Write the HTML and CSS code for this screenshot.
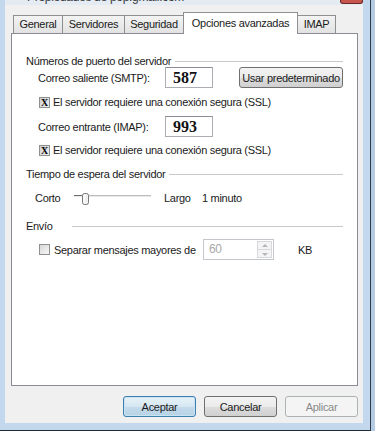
FILE: index.html
```html
<!DOCTYPE html>
<html lang="es">
<head>
  <meta charset="UTF-8">
  <title>Opciones avanzadas</title>
  <link rel="stylesheet" href="styles.css">
</head>
<body>

<div class="screen">
  <div class="window">
    <!-- Title bar (mostly cut off) -->
    <div class="titlebar">
      <span class="title">Propiedades de pop.gmail.com</span>
      <span class="close-btn"></span>
    </div>

    <div class="dialog">
      <!-- Tabs -->
      <div class="tabs">
        <div class="tab tab-general">General</div>
        <div class="tab tab-servers">Servidores</div>
        <div class="tab tab-security">Seguridad</div>
        <div class="tab tab-advanced active">Opciones avanzadas</div>
        <div class="tab tab-imap">IMAP</div>
      </div>

      <div class="panel">
        <!-- Ports -->
        <div class="group-title">Números de puerto del servidor</div>
        <div class="field-row">
          <span class="field-label">Correo saliente (SMTP):</span>
          <span class="num-input">587</span>
          <button class="btn btn-port">Usar predeterminado</button>
        </div>
        <div class="check-row">
          <span class="check checked">X</span>
          <span>El servidor requiere una conexión segura (SSL)</span>
        </div>
        <div class="field-row field-row-imap">
          <span class="field-label">Correo entrante (IMAP):</span>
          <span class="num-input">993</span>
        </div>
        <div class="check-row check-row-imap">
          <span class="check checked">X</span>
          <span>El servidor requiere una conexión segura (SSL)</span>
        </div>

        <!-- Timeout -->
        <div class="group-title group-timeout">Tiempo de espera del servidor</div>
        <div class="slider-row">
          <span class="slider-min">Corto</span>
          <svg class="slider" width="78" height="14" viewBox="0 0 78 14">
            <line x1="0" y1="2.5" x2="77" y2="2.5" stroke="#bdbdbd"/>
            <line x1="0" y1="3.5" x2="77" y2="3.5" stroke="#e8e8e8"/>
            <line x1="0" y1="2.5" x2="8" y2="2.5" stroke="#6f6f6f"/>
            <rect x="8.5" y="0.5" width="6" height="11" rx="2" fill="#f1f1f1" stroke="#777"/>
            <line x1="10" y1="2" x2="10" y2="10" stroke="#fff"/>
          </svg>
          <span class="slider-max">Largo</span>
          <span>1 minuto</span>
        </div>

        <!-- Sending -->
        <div class="group-title group-send">Envío</div>
        <div class="split-row">
          <span class="check"></span>
          <span class="split-label">Separar mensajes mayores de</span>
          <span class="spin-input">
            <span class="spin-value">60</span>
            <span class="spin-buttons">
              <span class="spin-up"></span>
              <span class="spin-down"></span>
            </span>
          </span>
          <span class="unit">KB</span>
        </div>
      </div>

      <!-- Dialog buttons -->
      <div class="button-bar">
        <button class="btn btn-default">Aceptar</button>
        <button class="btn">Cancelar</button>
        <button class="btn btn-disabled">Aplicar</button>
      </div>
    </div>
  </div>
</div>

</body>
</html>
```

FILE: styles.css
```css
/* Base Reset */
* { margin: 0; padding: 0; box-sizing: border-box; }
body {
  background: #fff;
  font-family: "Liberation Sans", Arial, sans-serif;
  font-size: 11px;
  letter-spacing: -0.3px;
  color: #1b1b1b;
}

/* Window frame */
.screen {
  width: 375px;
  height: 431px;
  background: #b5cbe4;
}

.window {
  width: 371px;
  height: 431px;
  display: flex;
  flex-direction: column;
  background: #c3d7ed;
  border-right: 1px solid #2a3b4b;
  border-bottom: 1px solid #1c2a35;
  padding: 0 7px 7px 5px;
}

.titlebar {
  height: 5px;
  display: flex;
  justify-content: space-between;
  overflow: hidden;
  background: #e4ebf3;
}

.title {
  font-size: 12px;
  line-height: 12px;
  margin-top: -9px;
  padding-left: 22px;
  color: #3a3a3a;
}

.close-btn {
  width: 23px;
  height: 4px;
  background: #c9564d;
  border: 1px solid #6b2a25;
  border-top: none;
  border-radius: 0 0 3px 3px;
}

/* Dialog body */
.dialog {
  flex: 1;
  display: flex;
  flex-direction: column;
  background: #f0f0f0;
  padding: 7px 5px 6px 6px;
}

/* Tabs */
.tabs {
  display: flex;
  align-items: flex-end;
  height: 21px;
  padding-left: 2px;
  position: relative;
  z-index: 1;
}

.tab {
  height: 18px;
  line-height: 17px;
  text-align: center;
  border: 1px solid #8e8f8f;
  border-bottom: none;
  margin-right: -1px;
  background: linear-gradient(#f3f3f3, #e2e2e2);
}

.tab-general { width: 50px; }
.tab-servers { width: 63px; }
.tab-security { width: 60px; }
.tab-advanced { width: 115px; }
.tab-imap { width: 39px; }

.tab.active {
  height: 22px;
  line-height: 20px;
  margin-bottom: -1px;
  background: #fff;
}

/* Tab panel */
.panel {
  height: 353px;
  background: #fff;
  border: 1px solid #898c95;
  padding: 22px 14px 0 14px;
}

.group-title {
  display: flex;
  align-items: center;
  gap: 4px;
  height: 11px;
  line-height: 11px;
}

.group-title::after {
  content: "";
  flex: 1;
  height: 1px;
  background: #c8c8c8;
}

.group-timeout { margin-top: 12px; }
.group-send { margin-top: 15px; gap: 19px; }

.field-row {
  display: flex;
  align-items: center;
  height: 21px;
  padding-left: 12px;
}

.field-row-imap { margin-top: 7px; }

.field-label { width: 127px; }

.num-input {
  width: 48px;
  height: 21px;
  border: 1px solid #abadb3;
  border-top-color: #8a8d94;
  padding-left: 7px;
  font-family: "Liberation Serif", "Times New Roman", serif;
  font-weight: bold;
  font-size: 16px;
  line-height: 19px;
  letter-spacing: 0;
  color: #111;
}

.check-row {
  display: flex;
  align-items: center;
  gap: 3px;
  height: 14px;
  margin-top: 7px;
  padding-left: 13px;
}

.check-row-imap { margin-top: 6px; }

.check {
  width: 11px;
  height: 11px;
  flex-shrink: 0;
  border: 1px solid #8e8f8f;
  background: linear-gradient(135deg, #d9d9d9, #f6f6f6);
  font-family: "Liberation Serif", "Times New Roman", serif;
  font-weight: bold;
  font-size: 10px;
  line-height: 9px;
  text-align: center;
  letter-spacing: 0;
  color: #000;
}

.check.checked {
  background: linear-gradient(135deg, #cfcfcf, #eeeeee);
}

/* Slider */
.slider-row {
  display: flex;
  align-items: center;
  height: 16px;
  margin-top: 10px;
  padding-left: 9px;
}

.slider-min { width: 39px; }
.slider { margin-top: 4px; }
.slider-max { width: 38px; margin-left: 12px; }

/* Split messages */
.split-row {
  display: flex;
  align-items: center;
  height: 21px;
  margin-top: 7px;
  padding-left: 13px;
}

.split-label {
  width: 153px;
  padding-left: 4px;
}

.spin-input {
  width: 71px;
  height: 21px;
  display: flex;
  justify-content: space-between;
  border: 1px solid #c4c7cc;
  padding: 1px;
}

.spin-value {
  padding-left: 4px;
  line-height: 17px;
  font-size: 12px;
  color: #a8a8a8;
}

.spin-buttons {
  width: 15px;
  display: flex;
  flex-direction: column;
}

.spin-up,
.spin-down {
  flex: 1;
  position: relative;
  border: 1px solid #d6d8db;
  background: #f4f4f4;
}

.spin-down { border-top: none; }

.spin-up::after,
.spin-down::after {
  content: "";
  position: absolute;
  left: 4px;
  top: 2px;
  border-left: 3px solid transparent;
  border-right: 3px solid transparent;
}

.spin-up::after { border-bottom: 3px solid #b5b5b5; }
.spin-down::after { border-top: 3px solid #b5b5b5; top: 3px; }

.unit { margin-left: 24px; }

/* Buttons */
.btn {
  height: 21px;
  font-family: inherit;
  font-size: 11px;
  letter-spacing: -0.3px;
  color: #1b1b1b;
  border: 1px solid #707070;
  border-radius: 3px;
  background: linear-gradient(#f3f3f3 0%, #ebebeb 50%, #dddddd 51%, #d0d0d0 100%);
}

.btn-port {
  width: 104px;
  margin-left: 26px;
}

.button-bar {
  display: flex;
  justify-content: flex-end;
  gap: 8px;
  margin-top: 10px;
}

.button-bar .btn { width: 73px; }

.btn-default {
  border-color: #3c7fb1;
  background: linear-gradient(#e8f2f8 0%, #d6e7f2 50%, #c4dbeb 51%, #b7d2e5 100%);
  box-shadow: inset 0 0 0 1px #c9e3f3;
}

.btn-disabled {
  border-color: #adb2b5;
  background: #f4f4f4;
  color: #8a8a8a;
}
```
